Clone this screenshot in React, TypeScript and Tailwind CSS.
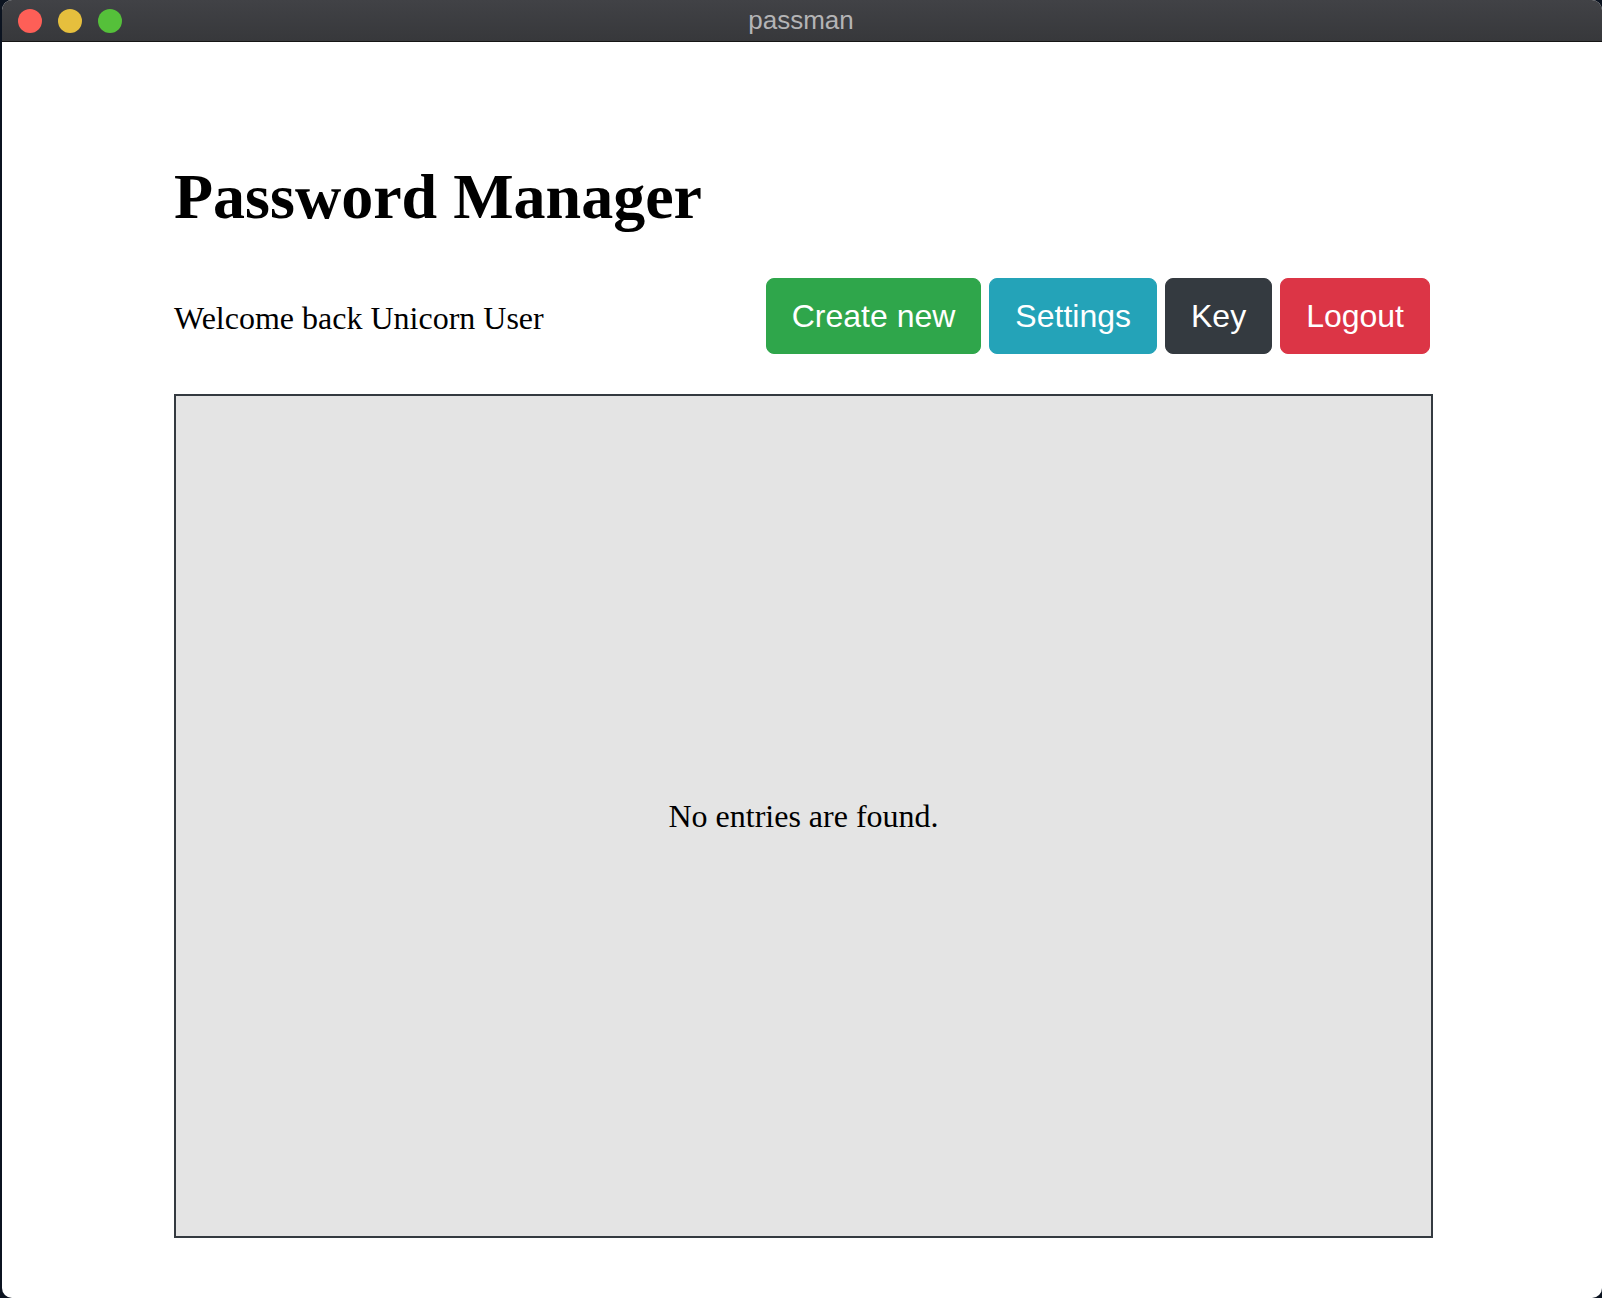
export default function App() {
  const buttons = [
    { label: 'Create new', cls: 'bg-[#2fa64b] border-[#2fa64b]' },
    { label: 'Settings', cls: 'bg-[#24a3b8] border-[#24a3b8]' },
    { label: 'Key', cls: 'bg-[#343a40] border-[#343a40]' },
    { label: 'Logout', cls: 'bg-[#dc3546] border-[#dc3546]' },
  ];

  return (
    <div className="w-[1602px] h-[1298px] bg-[#0b1320] flex">
      <div className="ml-[2px] flex-1 flex flex-col rounded-[10px] overflow-hidden bg-white">
        {/* Title bar */}
        <div className="relative h-[42px] shrink-0 flex items-center gap-[16px] pl-[16px] bg-gradient-to-b from-[#414246] to-[#37383b] border-b border-[#151515]">
          <span className="w-[24px] h-[24px] rounded-full bg-[#fe5f57]"></span>
          <span className="w-[24px] h-[24px] rounded-full bg-[#e6bf3d]"></span>
          <span className="w-[24px] h-[24px] rounded-full bg-[#55c03a]"></span>
          <div className="absolute inset-0 flex items-center justify-center pr-[2px] text-[26px] text-[#b4b4b6] font-['Liberation_Sans',Arial,sans-serif] pointer-events-none">
            passman
          </div>
        </div>

        {/* Content */}
        <div className="pl-[172px] pt-[116px] font-['Liberation_Serif','Times_New_Roman',serif] text-black">
          <div className="w-[1259px]">
            <h1 className="text-[64px] leading-[77px] font-bold">Password Manager</h1>

            <div className="mt-[43px] h-[76px] flex items-center justify-between">
              <p className="text-[32px] leading-[48px] pt-[3px]">Welcome back Unicorn User</p>
              <div className="flex gap-[8px] mr-[3px]">
                {buttons.map(b => (
                  <button
                    key={b.label}
                    type="button"
                    className={`${b.cls} border text-white rounded-[8px] px-[25px] py-[13px] text-[32px] leading-[48px] font-['Liberation_Sans',Arial,sans-serif]`}
                  >
                    {b.label}
                  </button>
                ))}
              </div>
            </div>

            <div className="mt-[40px] h-[844px] border-2 border-[#343a40] bg-[#e4e4e4] flex items-center justify-center">
              <p className="text-[32px] leading-[48px]">No entries are found.</p>
            </div>
          </div>
        </div>
      </div>
    </div>
  );
}
